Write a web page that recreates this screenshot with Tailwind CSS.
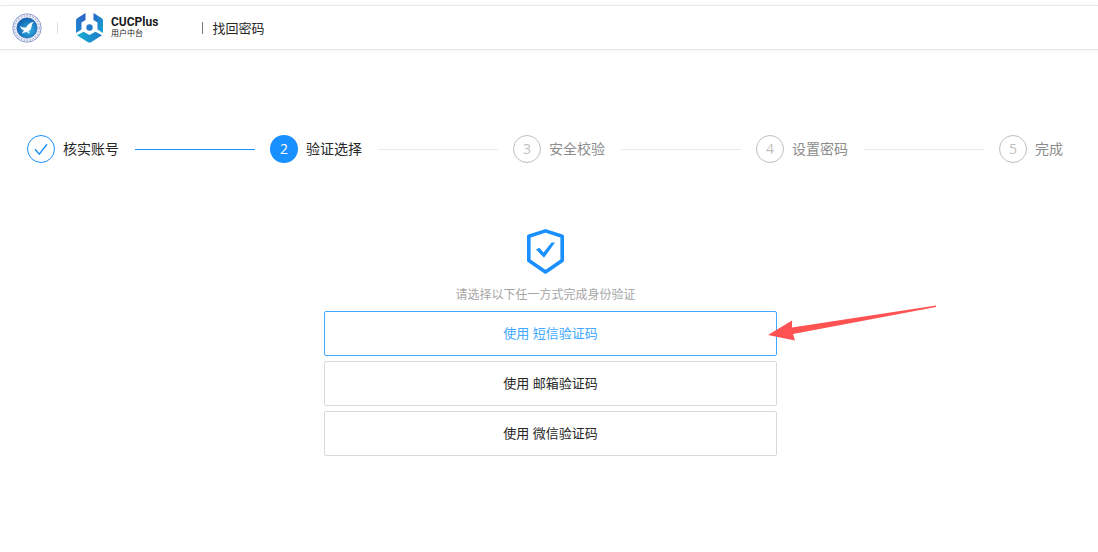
<!DOCTYPE html>
<html lang="zh-CN">
<head>
<meta charset="utf-8">
<meta name="viewport" content="width=device-width, initial-scale=1">
<title>找回密码</title>
<script src="https://cdn.jsdelivr.net/npm/@tailwindcss/browser@4"></script>
</head>
<body class="min-h-screen bg-white pt-[5px] font-['Open_Sans','Noto_Sans_CJK_SC',sans-serif] text-[#262626]">
<header class="flex h-[45px] items-center border-y border-[#e8e8e8] pl-3 shadow-[0_1px_3px_rgba(0,0,0,0.05)]">
  <svg class="size-[30px]" viewBox="0 0 30 30" aria-hidden="true">
    <defs>
      <radialGradient id="seal" cx=".6" cy=".6" r=".6"><stop offset="0" stop-color="#36b4e6"/><stop offset="1" stop-color="#1062b0"/></radialGradient>
    </defs>
    <circle cx="15" cy="15" r="14.200" fill="#f2f4fa" stroke="#8d9ccb" stroke-width="1"/>
    <circle cx="15" cy="15" r="12.300" fill="none" stroke="#b3bddd" stroke-width="1.800" stroke-dasharray="1.600 1.400"/>
    <circle cx="15" cy="15" r="10.200" fill="url(#seal)" stroke="#2c64ae" stroke-width=".6"/>
    <path d="M8 13c2.500 1.500 4.500 1.700 6.200 1.400 1.600-3 4-5 7.800-5.600-1.600 1.400-2 2.600-2.300 4.200-.4 3-1.800 5-4.500 5.800-2 .7-3.400.7-5.200 2.200.6-2 1.400-2.700 2.200-3.500C9.800 16.700 8.500 15 8 13z" fill="#fff"/>
    <path d="M15 19l2.500 2-.5-3z" fill="#fff"/>
  </svg>
  <span class="ml-[15px] h-3 w-px bg-[#e0e0e0]"></span>
  <svg class="ml-[18px] h-[30px] w-[27px]" viewBox="0 0 27 30" aria-hidden="true">
    <defs>
      <linearGradient id="brand-left" x1="1" y1="0" x2="0" y2="1"><stop offset="0" stop-color="#2f5fc6"/><stop offset="1" stop-color="#1e8bd2"/></linearGradient>
      <linearGradient id="brand-right" x1="0" y1="0" x2="1" y2="1"><stop offset="0" stop-color="#2a62c6"/><stop offset="1" stop-color="#15abd0"/></linearGradient>
      <linearGradient id="brand-base" x1="0" y1="0" x2="1" y2="0"><stop offset="0" stop-color="#12b0d0"/><stop offset="1" stop-color="#2276cb"/></linearGradient>
    </defs>
    <path d="M9.500 0V7L5.500 9.500V16.500L0 20V7.500Q0 6 1.200 5.200z" fill="url(#brand-left)"/>
    <path d="M17.500 0V7L21.500 9.500V16.500L27 20V7.500Q27 6 25.800 5.200z" fill="url(#brand-right)"/>
    <path d="M1 22.200L7.500 18.700L13.500 22L19.500 18.700L26 22.200L15 29.200Q13.500 30 12 29.200z" fill="url(#brand-base)"/>
    <circle cx="13.500" cy="14.500" r="3.200" fill="#2379cc"/>
  </svg>
  <div class="ml-2 flex flex-col font-[Roboto,'Noto_Sans_CJK_SC',sans-serif] text-[#1a1a1a]">
    <span class="text-xs leading-3 font-bold">CUCPlus</span>
    <span class="text-[8px] leading-[11px]">用户中台</span>
  </div>
  <span class="ml-[44px] h-3 w-px bg-[#777]"></span>
  <h1 class="ml-[9px] text-[13px] leading-5">找回密码</h1>
</header>

<main>
  <ol class="mt-[85px] flex items-center px-[27px] text-sm leading-7">
    <li class="flex flex-1 items-center">
      <span class="flex size-7 items-center justify-center rounded-full border border-[#1890ff]">
        <svg class="size-[14px]" viewBox="0 0 14 14" fill="none" stroke="#1890ff" stroke-width="1.400" aria-label="已完成"><path d="M1 7.200l4.300 5L13 2.200"/></svg>
      </span>
      <span class="ml-2">核实账号</span>
      <span class="mr-[15px] ml-4 h-px flex-1 bg-[#1890ff]"></span>
    </li>
    <li class="flex flex-1 items-center" aria-current="step">
      <span class="flex size-7 items-center justify-center rounded-full bg-[#1890ff] text-white">2</span>
      <span class="ml-2">验证选择</span>
      <span class="mr-[15px] ml-4 h-px flex-1 bg-[#eaeaea]"></span>
    </li>
    <li class="flex flex-1 items-center text-[#8c8c8c]">
      <span class="flex size-7 items-center justify-center rounded-full border border-[#bfbfbf] text-[#bfbfbf]">3</span>
      <span class="ml-2">安全校验</span>
      <span class="mr-[15px] ml-4 h-px flex-1 bg-[#eaeaea]"></span>
    </li>
    <li class="flex flex-1 items-center text-[#8c8c8c]">
      <span class="flex size-7 items-center justify-center rounded-full border border-[#bfbfbf] text-[#bfbfbf]">4</span>
      <span class="ml-2">设置密码</span>
      <span class="mr-[15px] ml-4 h-px flex-1 bg-[#eaeaea]"></span>
    </li>
    <li class="flex w-[72px] items-center text-[#8c8c8c]">
      <span class="flex size-7 items-center justify-center rounded-full border border-[#bfbfbf] text-[#bfbfbf]">5</span>
      <span class="ml-2">完成</span>
    </li>
  </ol>

  <section class="mt-[66px] pl-[3px]">
    <div class="mx-auto flex max-w-[453px] flex-col gap-[5px] text-[13px]">
      <div class="flex flex-col items-center pr-[10px]">
        <svg class="h-[45px] w-[37px]" viewBox="0 0 37 45" aria-hidden="true">
          <path d="M18.500 1.900L35.200 7.300V31.500L18.500 43L1.800 31.500V7.300z" fill="none" stroke="#1890ff" stroke-width="3.600" stroke-linejoin="round"/>
          <path d="M9 20.500L12.300 18.700L16.500 23.500L24.500 13.500H28L17 28.800z" fill="#1890ff"/>
        </svg>
        <p class="mt-[10px] text-xs leading-[22px] text-[#a6a6a6]">请选择以下任一方式完成身份验证</p>
      </div>
      <div class="relative flex">
        <button type="button" class="h-[45px] flex-1 rounded-[2px] border border-[#40a9ff] text-[#40a9ff]">使用 短信验证码</button>
        <svg class="pointer-events-none absolute -top-[6px] left-full -ml-[10px] h-9 w-[170px]" viewBox="0 0 170 36" aria-hidden="true">
          <path d="M1 30L25 15.500V22.500L169 .5V2L26 29L28 35.500z" fill="#ff5252"/>
        </svg>
      </div>
      <button type="button" class="h-[45px] rounded-[2px] border border-[#d9d9d9]">使用 邮箱验证码</button>
      <button type="button" class="h-[45px] rounded-[2px] border border-[#d9d9d9]">使用 微信验证码</button>
    </div>
  </section>
</main>
</body>
</html>
